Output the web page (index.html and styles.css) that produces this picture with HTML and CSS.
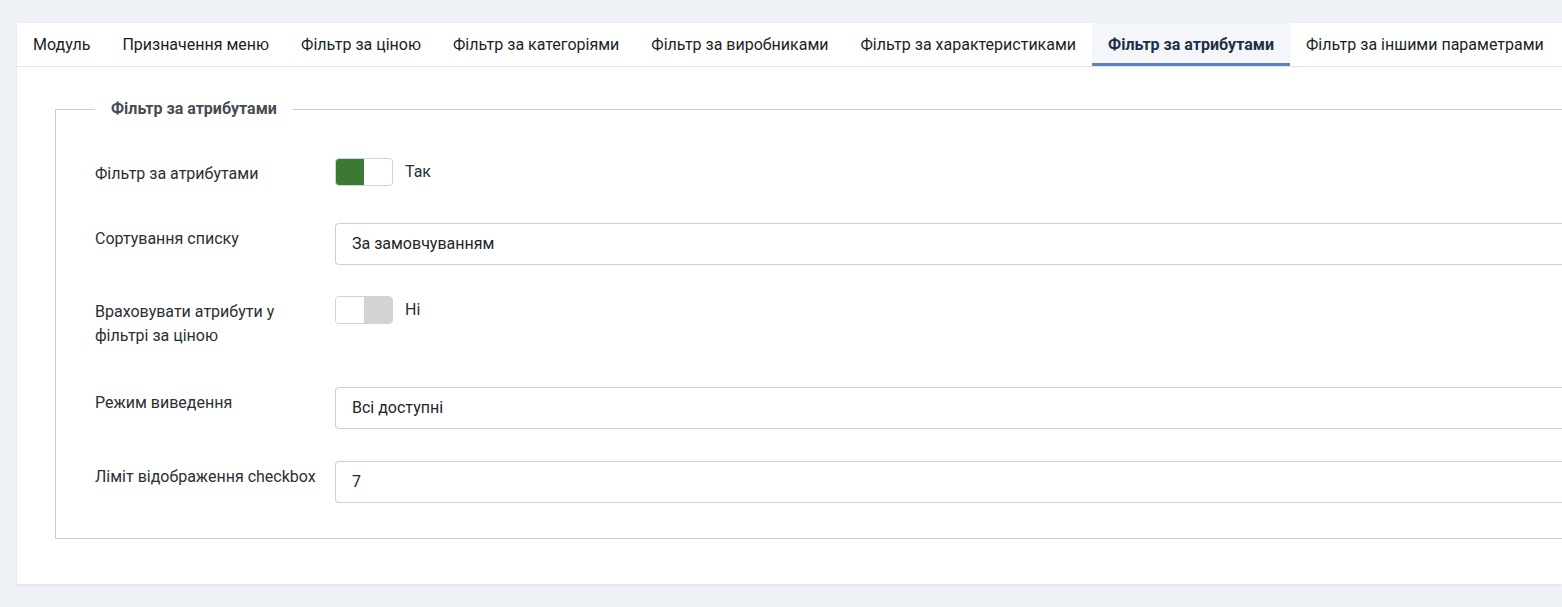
FILE: index.html
```html
<!DOCTYPE html>
<html lang="uk">
<head>
<meta charset="utf-8">
<title>Фільтр за атрибутами</title>
<link rel="stylesheet" href="styles.css">
</head>
<body>
<div class="page">
  <div class="card">
    <div class="tabs">
      <div class="tab">Модуль</div>
      <div class="tab">Призначення меню</div>
      <div class="tab">Фільтр за ціною</div>
      <div class="tab">Фільтр за категоріями</div>
      <div class="tab">Фільтр за виробниками</div>
      <div class="tab">Фільтр за характеристиками</div>
      <div class="tab active">Фільтр за атрибутами</div>
      <div class="tab">Фільтр за іншими параметрами</div>
    </div>
    <div class="content">
      <fieldset class="group">
        <legend class="legend">Фільтр за атрибутами</legend>
        <div class="row">
          <div class="label">Фільтр за атрибутами</div>
          <div class="control">
            <span class="switch on"><span class="half a"></span><span class="half b"></span></span>
            <span class="switch-text">Так</span>
          </div>
        </div>
        <div class="row before-tall">
          <div class="label">Сортування списку</div>
          <div class="control"><div class="field">За замовчуванням</div></div>
        </div>
        <div class="row tall">
          <div class="label">Враховувати атрибути у фільтрі за ціною</div>
          <div class="control">
            <span class="switch off"><span class="half a"></span><span class="half b"></span></span>
            <span class="switch-text">Ні</span>
          </div>
        </div>
        <div class="row">
          <div class="label">Режим виведення</div>
          <div class="control"><div class="field">Всі доступні</div></div>
        </div>
        <div class="row last">
          <div class="label">Ліміт відображення checkbox</div>
          <div class="control"><div class="field">7</div></div>
        </div>
      </fieldset>
    </div>
  </div>
</div>
</body>
</html>
```
FILE: styles.css
```css
html, body {
  margin: 0;
  padding: 0;
  background: #eef1f6;
  font-family: Roboto, "Noto Sans", "Liberation Sans", sans-serif;
  color: #22262a;
  overflow: hidden;
}
.page {
  padding: 23px 0 0 17px;
  height: 607px;
  box-sizing: border-box;
}
.card {
  background: #fff;
  box-shadow: 0 1px 3px rgba(30, 50, 90, 0.08);
  padding-bottom: 45px;
}
.tabs {
  display: flex;
  border-bottom: 1px solid #dfe3e8;
}
.tab {
  padding: 12px 16px 11px;
  font-size: 16px;
  line-height: 20px;
  color: #1c1f23;
  white-space: nowrap;
}
.tab.active {
  background: #f4f6f9;
  font-weight: 700;
  color: #1e2f48;
  box-shadow: inset 0 -3px 0 #5b83bd;
}
.content {
  padding: 32px 0 0 38px;
}
.group {
  margin: 0;
  border: 1px solid #c7ced6;
  border-right: none;
  padding: 39px 0 35px 39px;
  min-width: 0;
}
.legend {
  padding: 0 16px;
  font-size: 16px;
  font-weight: 700;
  color: #454c54;
  line-height: 20px;
}
.row {
  display: flex;
  margin-bottom: 32px;
}
.row.before-tall {
  margin-bottom: 31px;
}
.row.tall {
  margin-bottom: 34px;
}
.row.last {
  margin-bottom: 0;
}
.label {
  width: 240px;
  flex: none;
  padding: 4px 8px 5px 0;
  box-sizing: border-box;
  font-size: 16px;
  line-height: 24px;
  color: #2a2f34;
}
.control {
  flex: 1;
  display: flex;
  align-items: flex-start;
}
.switch {
  display: inline-flex;
  width: 58px;
  height: 28px;
  border: 1px solid #cfd4d9;
  border-radius: 4px;
  box-sizing: border-box;
  overflow: hidden;
  flex: none;
}
.half {
  flex: 1;
}
.switch.on .a { background: #3b7a35; }
.switch.on .b { background: #fff; }
.switch.off .a { background: #fff; }
.switch.off .b { background: #d2d3d4; }
.switch-text {
  margin-left: 12px;
  font-size: 16px;
  line-height: 28px;
  color: #2a2f34;
}
.field {
  flex: 1;
  height: 42px;
  border: 1px solid #c9d0d7;
  border-right: none;
  border-radius: 4px 0 0 4px;
  box-sizing: border-box;
  padding: 0 16px;
  font-size: 16px;
  line-height: 40px;
  color: #22262a;
}
```
